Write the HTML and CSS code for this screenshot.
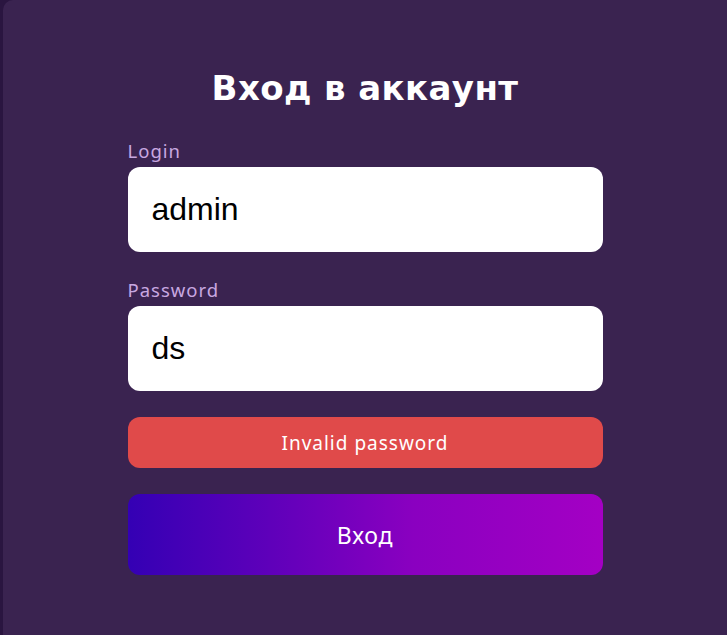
FILE: index.html
```html
<!DOCTYPE html>
<html lang="ru">
<head>
<meta charset="utf-8">
<link rel="stylesheet" href="styles.css">
</head>
<body>
<div class="card">
  <form class="form">
    <h1 class="title">Вход в аккаунт</h1>
    <label class="field">
      <span class="label">Login</span>
      <input class="input" type="text" value="admin">
    </label>
    <label class="field">
      <span class="label">Password</span>
      <input class="input" type="text" value="ds">
    </label>
    <div class="error">Invalid password</div>
    <button class="submit" type="button">Вход</button>
  </form>
</div>
</body>
</html>
```

FILE: styles.css
```css
html, body {
  margin: 0;
  height: 100%;
  background: #2a1540;
  overflow: hidden;
}
body {
  padding-left: 3px;
  box-sizing: border-box;
}
.card {
  background: #3a2350;
  height: 100%;
  border-radius: 10px 0 0 0;
  display: flex;
  justify-content: center;
  margin-right: -10px;
  padding-right: 10px;
  margin-bottom: -10px;
}
.form {
  width: 475px;
  margin-left: 0;
  display: flex;
  flex-direction: column;
  padding-top: 66px;
}
.title {
  margin: 0 0 30px;
  text-align: center;
  color: #ffffff;
  font-family: "DejaVu Sans", "Open Sans", sans-serif;
  font-weight: 700;
  font-size: 34px;
  letter-spacing: 0.4px;
  line-height: 44px;
}
.field {
  display: flex;
  flex-direction: column;
  margin-bottom: 27px;
}
.label {
  color: #c8a8e0;
  font-family: "Noto Sans", "Open Sans", sans-serif;
  font-size: 18.5px;
  letter-spacing: 1px;
  line-height: 22px;
  margin-bottom: 5px;
}
.input {
  height: 85px;
  box-sizing: border-box;
  border: none;
  border-radius: 12px;
  background: #ffffff;
  padding: 0 24px;
  font-family: "Liberation Sans", Arial, sans-serif;
  font-size: 32px;
  color: #000;
  outline: none;
}
.error {
  margin-top: -1px;
  height: 51px;
  border-radius: 12px;
  background: #e04a4a;
  color: #ffffff;
  font-family: "Noto Sans", "Open Sans", sans-serif;
  font-size: 19px;
  letter-spacing: 1px;
  display: flex;
  align-items: center;
  justify-content: center;
}
.submit {
  margin-top: 26px;
  height: 81px;
  border: none;
  border-radius: 12px;
  background: linear-gradient(90deg, #3400b4 0%, #8a00c0 60%, #a400c4 100%);
  color: #ffffff;
  font-family: "Noto Sans", "Open Sans", sans-serif;
  font-size: 23px;
  letter-spacing: 0.8px;
}
```
